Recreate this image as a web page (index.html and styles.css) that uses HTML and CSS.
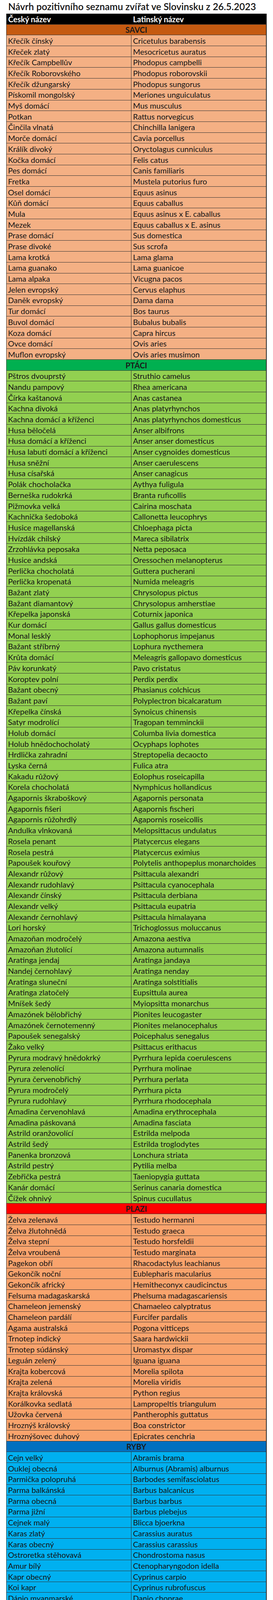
FILE: index.html
```html
<!DOCTYPE html>
<html lang="cs">
<head>
<meta charset="utf-8">
<title>Návrh pozitivního seznamu zvířat ve Slovinsku z 26.5.2023</title>
<link rel="stylesheet" href="styles.css">
</head>
<body>
<main class="page">
<h1 class="title">Návrh pozitivního seznamu zvířat ve Slovinsku z 26.5.2023</h1>
<div class="sheet">
<div class="head"><span class="c">Český název</span><span class="c">Latinský název</span></div>

<section class="grp savci">
<div class="sec">SAVCI</div>
<div class="r"><span class="c">Křečík čínský</span><span class="c">Cricetulus barabensis</span></div>
<div class="r"><span class="c">Křeček zlatý</span><span class="c">Mesocricetus auratus</span></div>
<div class="r"><span class="c">Křečík Campbellův</span><span class="c">Phodopus campbelli</span></div>
<div class="r"><span class="c">Křečík Roborovského</span><span class="c">Phodopus roborovskii</span></div>
<div class="r"><span class="c">Křečík džungarský</span><span class="c">Phodopus sungorus</span></div>
<div class="r"><span class="c">Pískomil mongolský</span><span class="c">Meriones unguiculatus</span></div>
<div class="r"><span class="c">Myš domácí</span><span class="c">Mus musculus</span></div>
<div class="r"><span class="c">Potkan</span><span class="c">Rattus norvegicus</span></div>
<div class="r"><span class="c">Činčila vlnatá</span><span class="c">Chinchilla lanigera</span></div>
<div class="r"><span class="c">Morče domácí</span><span class="c">Cavia porcellus</span></div>
<div class="r"><span class="c">Králík divoký</span><span class="c">Oryctolagus cunniculus</span></div>
<div class="r"><span class="c">Kočka domácí</span><span class="c">Felis catus</span></div>
<div class="r"><span class="c">Pes domácí</span><span class="c">Canis familiaris</span></div>
<div class="r"><span class="c">Fretka</span><span class="c">Mustela putorius furo</span></div>
<div class="r"><span class="c">Osel domácí</span><span class="c">Equus asinus</span></div>
<div class="r"><span class="c">Kůň domácí</span><span class="c">Equus caballus</span></div>
<div class="r"><span class="c">Mula</span><span class="c">Equus asinus x E. caballus</span></div>
<div class="r"><span class="c">Mezek</span><span class="c">Equus caballus x E. asinus</span></div>
<div class="r"><span class="c">Prase domácí</span><span class="c">Sus domestica</span></div>
<div class="r"><span class="c">Prase divoké</span><span class="c">Sus scrofa</span></div>
<div class="r"><span class="c">Lama krotká</span><span class="c">Lama glama</span></div>
<div class="r"><span class="c">Lama guanako</span><span class="c">Lama guanicoe</span></div>
<div class="r"><span class="c">Lama alpaka</span><span class="c">Vicugna pacos</span></div>
<div class="r"><span class="c">Jelen evropský</span><span class="c">Cervus elaphus</span></div>
<div class="r"><span class="c">Daněk evropský</span><span class="c">Dama dama</span></div>
<div class="r"><span class="c">Tur domácí</span><span class="c">Bos taurus</span></div>
<div class="r"><span class="c">Buvol domácí</span><span class="c">Bubalus bubalis</span></div>
<div class="r"><span class="c">Koza domácí</span><span class="c">Capra hircus</span></div>
<div class="r"><span class="c">Ovce domácí</span><span class="c">Ovis aries</span></div>
<div class="r"><span class="c">Muflon evropský</span><span class="c">Ovis aries musimon</span></div>
</section>

<section class="grp ptaci">
<div class="sec">PTÁCI</div>
<div class="r"><span class="c">Pštros dvouprstý</span><span class="c">Struthio camelus</span></div>
<div class="r"><span class="c">Nandu pampový</span><span class="c">Rhea americana</span></div>
<div class="r"><span class="c">Čírka kaštanová</span><span class="c">Anas castanea</span></div>
<div class="r"><span class="c">Kachna divoká</span><span class="c">Anas platyrhynchos</span></div>
<div class="r"><span class="c">Kachna domácí a kříženci</span><span class="c">Anas platyrhynchos domesticus</span></div>
<div class="r"><span class="c">Husa běločelá</span><span class="c">Anser albifrons</span></div>
<div class="r"><span class="c">Husa domácí a kříženci</span><span class="c">Anser anser domesticus</span></div>
<div class="r"><span class="c">Husa labutí domácí a kříženci</span><span class="c">Anser cygnoides domesticus</span></div>
<div class="r"><span class="c">Husa sněžní</span><span class="c">Anser caerulescens</span></div>
<div class="r"><span class="c">Husa císařská</span><span class="c">Anser canagicus</span></div>
<div class="r"><span class="c">Polák chocholačka</span><span class="c">Aythya fuligula</span></div>
<div class="r"><span class="c">Berneška rudokrká</span><span class="c">Branta ruficollis</span></div>
<div class="r"><span class="c">Pižmovka velká</span><span class="c">Cairina moschata</span></div>
<div class="r"><span class="c">Kachnička šedoboká</span><span class="c">Callonetta leucophrys</span></div>
<div class="r"><span class="c">Husice magellanská</span><span class="c">Chloephaga picta</span></div>
<div class="r"><span class="c">Hvízdák chilský</span><span class="c">Mareca sibilatrix</span></div>
<div class="r"><span class="c">Zrzohlávka peposaka</span><span class="c">Netta peposaca</span></div>
<div class="r"><span class="c">Husice andská</span><span class="c">Oressochen melanopterus</span></div>
<div class="r"><span class="c">Perlička chocholatá</span><span class="c">Guttera pucherani</span></div>
<div class="r"><span class="c">Perlička kropenatá</span><span class="c">Numida meleagris</span></div>
<div class="r"><span class="c">Bažant zlatý</span><span class="c">Chrysolopus pictus</span></div>
<div class="r"><span class="c">Bažant diamantový</span><span class="c">Chrysolopus amherstiae</span></div>
<div class="r"><span class="c">Křepelka japonská</span><span class="c">Coturnix japonica</span></div>
<div class="r"><span class="c">Kur domácí</span><span class="c">Gallus gallus domesticus</span></div>
<div class="r"><span class="c">Monal lesklý</span><span class="c">Lophophorus impejanus</span></div>
<div class="r"><span class="c">Bažant stříbrný</span><span class="c">Lophura nycthemera</span></div>
<div class="r"><span class="c">Krůta domácí</span><span class="c">Meleagris gallopavo domesticus</span></div>
<div class="r"><span class="c">Páv korunkatý</span><span class="c">Pavo cristatus</span></div>
<div class="r"><span class="c">Koroptev polní</span><span class="c">Perdix perdix</span></div>
<div class="r"><span class="c">Bažant obecný</span><span class="c">Phasianus colchicus</span></div>
<div class="r"><span class="c">Bažant paví</span><span class="c">Polyplectron bicalcaratum</span></div>
<div class="r"><span class="c">Křepelka čínská</span><span class="c">Synoicus chinensis</span></div>
<div class="r"><span class="c">Satyr modrolící</span><span class="c">Tragopan temminckii</span></div>
<div class="r"><span class="c">Holub domácí</span><span class="c">Columba livia domestica</span></div>
<div class="r"><span class="c">Holub hnědochocholatý</span><span class="c">Ocyphaps lophotes</span></div>
<div class="r"><span class="c">Hrdlička zahradní</span><span class="c">Streptopelia decaocto</span></div>
<div class="r"><span class="c">Lyska černá</span><span class="c">Fulica atra</span></div>
<div class="r"><span class="c">Kakadu růžový</span><span class="c">Eolophus roseicapilla</span></div>
<div class="r"><span class="c">Korela chocholatá</span><span class="c">Nymphicus hollandicus</span></div>
<div class="r"><span class="c">Agapornis škraboškový</span><span class="c">Agapornis personata</span></div>
<div class="r"><span class="c">Agapornis fišeri</span><span class="c">Agapornis fischeri</span></div>
<div class="r"><span class="c">Agapornis růžohrdlý</span><span class="c">Agapornis roseicollis</span></div>
<div class="r"><span class="c">Andulka vlnkovaná</span><span class="c">Melopsittacus undulatus</span></div>
<div class="r"><span class="c">Rosela penant</span><span class="c">Platycercus elegans</span></div>
<div class="r"><span class="c">Rosela pestrá</span><span class="c">Platycercus eximius</span></div>
<div class="r"><span class="c">Papoušek kouřový</span><span class="c">Polytelis anthopeplus monarchoides</span></div>
<div class="r"><span class="c">Alexandr růžový</span><span class="c">Psittacula alexandri</span></div>
<div class="r"><span class="c">Alexandr rudohlavý</span><span class="c">Psittacula cyanocephala</span></div>
<div class="r"><span class="c">Alexandr čínský</span><span class="c">Psittacula derbiana</span></div>
<div class="r"><span class="c">Alexandr velký</span><span class="c">Psittacula eupatria</span></div>
<div class="r"><span class="c">Alexandr černohlavý</span><span class="c">Psittacula himalayana</span></div>
<div class="r"><span class="c">Lori horský</span><span class="c">Trichoglossus moluccanus</span></div>
<div class="r"><span class="c">Amazoňan modročelý</span><span class="c">Amazona aestiva</span></div>
<div class="r"><span class="c">Amazoňan žlutolící</span><span class="c">Amazona autumnalis</span></div>
<div class="r"><span class="c">Aratinga jendaj</span><span class="c">Aratinga jandaya</span></div>
<div class="r"><span class="c">Nandej černohlavý</span><span class="c">Aratinga nenday</span></div>
<div class="r"><span class="c">Aratinga sluneční</span><span class="c">Aratinga solstitialis</span></div>
<div class="r"><span class="c">Aratinga zlatočelý</span><span class="c">Eupsittula aurea</span></div>
<div class="r"><span class="c">Mníšek šedý</span><span class="c">Myiopsitta monarchus</span></div>
<div class="r"><span class="c">Amazónek bělobřichý</span><span class="c">Pionites leucogaster</span></div>
<div class="r"><span class="c">Amazónek černotemenný</span><span class="c">Pionites melanocephalus</span></div>
<div class="r"><span class="c">Papoušek senegalský</span><span class="c">Poicephalus senegalus</span></div>
<div class="r"><span class="c">Žako velký</span><span class="c">Psittacus erithacus</span></div>
<div class="r"><span class="c">Pyrura modravý hnědokrký</span><span class="c">Pyrrhura lepida coerulescens</span></div>
<div class="r"><span class="c">Pyrura zelenolící</span><span class="c">Pyrrhura molinae</span></div>
<div class="r"><span class="c">Pyrura červenobřichý</span><span class="c">Pyrrhura perlata</span></div>
<div class="r"><span class="c">Pyrura modročelý</span><span class="c">Pyrrhura picta</span></div>
<div class="r"><span class="c">Pyrura rudohlavý</span><span class="c">Pyrrhura rhodocephala</span></div>
<div class="r"><span class="c">Amadina červenohlavá</span><span class="c">Amadina erythrocephala</span></div>
<div class="r"><span class="c">Amadina páskovaná</span><span class="c">Amadina fasciata</span></div>
<div class="r"><span class="c">Astrild oranžovolící</span><span class="c">Estrilda melpoda</span></div>
<div class="r"><span class="c">Astrild šedý</span><span class="c">Estrilda troglodytes</span></div>
<div class="r"><span class="c">Panenka bronzová</span><span class="c">Lonchura striata</span></div>
<div class="r"><span class="c">Astrild pestrý</span><span class="c">Pytilia melba</span></div>
<div class="r"><span class="c">Zebřička pestrá</span><span class="c">Taeniopygia guttata</span></div>
<div class="r"><span class="c">Kanár domácí</span><span class="c">Serinus canaria domestica</span></div>
<div class="r"><span class="c">Čížek ohnivý</span><span class="c">Spinus cucullatus</span></div>
</section>

<section class="grp plazi">
<div class="sec">PLAZI</div>
<div class="r"><span class="c">Želva zelenavá</span><span class="c">Testudo hermanni</span></div>
<div class="r"><span class="c">Želva žlutohnědá</span><span class="c">Testudo graeca</span></div>
<div class="r"><span class="c">Želva stepní</span><span class="c">Testudo horsfeldii</span></div>
<div class="r"><span class="c">Želva vroubená</span><span class="c">Testudo marginata</span></div>
<div class="r"><span class="c">Pagekon obří</span><span class="c">Rhacodactylus leachianus</span></div>
<div class="r"><span class="c">Gekončík noční</span><span class="c">Eublepharis macularius</span></div>
<div class="r"><span class="c">Gekončík africký</span><span class="c">Hemitheconyx caudicinctus</span></div>
<div class="r"><span class="c">Felsuma madagaskarská</span><span class="c">Phelsuma madagascariensis</span></div>
<div class="r"><span class="c">Chameleon jemenský</span><span class="c">Chamaeleo calyptratus</span></div>
<div class="r"><span class="c">Chameleon pardálí</span><span class="c">Furcifer pardalis</span></div>
<div class="r"><span class="c">Agama australská</span><span class="c">Pogona vitticeps</span></div>
<div class="r"><span class="c">Trnotep indický</span><span class="c">Saara hardwickii</span></div>
<div class="r"><span class="c">Trnotep súdánský</span><span class="c">Uromastyx dispar</span></div>
<div class="r"><span class="c">Leguán zelený</span><span class="c">Iguana iguana</span></div>
<div class="r"><span class="c">Krajta kobercová</span><span class="c">Morelia spilota</span></div>
<div class="r"><span class="c">Krajta zelená</span><span class="c">Morelia viridis</span></div>
<div class="r"><span class="c">Krajta královská</span><span class="c">Python regius</span></div>
<div class="r"><span class="c">Korálkovka sedlatá</span><span class="c">Lampropeltis triangulum</span></div>
<div class="r"><span class="c">Užovka červená</span><span class="c">Pantherophis guttatus</span></div>
<div class="r"><span class="c">Hroznýš královský</span><span class="c">Boa constrictor</span></div>
<div class="r"><span class="c">Hroznýšovec duhový</span><span class="c">Epicrates cenchria</span></div>
</section>

<section class="grp ryby">
<div class="sec">RYBY</div>
<div class="r"><span class="c">Cejn velký</span><span class="c">Abramis brama</span></div>
<div class="r"><span class="c">Ouklej obecná</span><span class="c">Alburnus (Abramis) alburnus</span></div>
<div class="r"><span class="c">Parmička polopruhá</span><span class="c">Barbodes semifasciolatus</span></div>
<div class="r"><span class="c">Parma balkánská</span><span class="c">Barbus balcanicus</span></div>
<div class="r"><span class="c">Parma obecná</span><span class="c">Barbus barbus</span></div>
<div class="r"><span class="c">Parma jižní</span><span class="c">Barbus plebejus</span></div>
<div class="r"><span class="c">Cejnek malý</span><span class="c">Blicca bjoerkna</span></div>
<div class="r"><span class="c">Karas zlatý</span><span class="c">Carassius auratus</span></div>
<div class="r"><span class="c">Karas obecný</span><span class="c">Carassius carassius</span></div>
<div class="r"><span class="c">Ostroretka stěhovavá</span><span class="c">Chondrostoma nasus</span></div>
<div class="r"><span class="c">Amur bílý</span><span class="c">Ctenopharyngodon idella</span></div>
<div class="r"><span class="c">Kapr obecný</span><span class="c">Cyprinus carpio</span></div>
<div class="r"><span class="c">Koi kapr</span><span class="c">Cyprinus rubrofuscus</span></div>
<div class="r"><span class="c">Dánio myanmarské</span><span class="c">Danio choprae</span></div>
<div class="r"><span class="c">Dánio perlové</span><span class="c">Danio margaritatus</span></div>
<div class="r"><span class="c">Dánio pruhované</span><span class="c">Danio rerio</span></div>
<div class="r"><span class="c">Parmička pětipruhá</span><span class="c">Desmopuntius pentazona</span></div>
<div class="r"><span class="c">Bolen dravý</span><span class="c">Leuciscus aspius</span></div>
<div class="r"><span class="c">Jelec jesen</span><span class="c">Leuciscus idus</span></div>
<div class="r"><span class="c">Jelec proudník</span><span class="c">Leuciscus leuciscus</span></div>
<div class="r"><span class="c">Parmička z Oděsy</span><span class="c">Pethia padamya</span></div>
<div class="r"><span class="c">Parmička purpurová</span><span class="c">Pethia nigrofasciata</span></div>
<div class="r"><span class="c">Střevle potoční</span><span class="c">Phoxinus phoxinus</span></div>
<div class="r"><span class="c">Parmička čtyřpruhá</span><span class="c">Puntigrus tetrazona</span></div>
<div class="r"><span class="c">Parmička duhová</span><span class="c">Puntius titteya</span></div>
<div class="r"><span class="c">Plotice lesklá</span><span class="c">Rutilus pigus</span></div>
<div class="r"><span class="c">Plotice obecná</span><span class="c">Rutilus rutilus</span></div>
<div class="r"><span class="c">Parmička Denisonova</span><span class="c">Sahyadria denisonii</span></div>
<div class="r"><span class="c">Perlín ostrobřichý</span><span class="c">Scardinius erithrophthalmus</span></div>
<div class="r"><span class="c">Jelec tloušť</span><span class="c">Squalius cephalus</span></div>
<div class="r"><span class="c">Kardinálka čínská</span><span class="c">Tanichthys albonubes</span></div>
<div class="r"><span class="c">Kardinálka vietnamská</span><span class="c">Tanichthys micagemmae</span></div>
<div class="r"><span class="c">Lín obecný</span><span class="c">Tinca tinca</span></div>
<div class="r"><span class="c">Razbora Espeho</span><span class="c">Trigonostigma espei</span></div>
<div class="r"><span class="c">Razbora Hengelova</span><span class="c">Trigonostigma hengeli</span></div>
<div class="r"><span class="c">Razbora klínoskvrnná</span><span class="c">Trigonostigma heteromorpha</span></div>
<div class="r"><span class="c">Podoustev říční</span><span class="c">Vimba vimba</span></div>
<div class="r"><span class="c">Sekavec příčnopásý</span><span class="c">Pangio kuhlii</span></div>
<div class="r"><span class="c">Tetra konžská</span><span class="c">Phenacogrammus interruptus</span></div>
<div class="r"><span class="c">Tetra černá</span><span class="c">Gymnocorymbus ternetzi</span></div>
<div class="r"><span class="c">Tetra štíhlá</span><span class="c">Hemigrammus gracilis</span></div>
<div class="r"><span class="c">Tetra císařská</span><span class="c">Nematobrycon palmeri</span></div>
<div class="r"><span class="c">Neonka červená</span><span class="c">Paracheirodon axelrodi</span></div>
<div class="r"><span class="c">Neonka obecná</span><span class="c">Paracheirodon innesi</span></div>
<div class="r"><span class="c">Neonka modrá</span><span class="c">Paracheirodon simulans</span></div>
<div class="r"><span class="c">Pancéřníček zelený</span><span class="c">Corydoras aeneus</span></div>
<div class="r"><span class="c">Pancéřníček skvrnitý</span><span class="c">Corydoras paleatus</span></div>
<div class="r"><span class="c">Krunýřovec modrý</span><span class="c">Ancistrus dolichopterus</span></div>
<div class="r"><span class="c">Sumec sklovitý</span><span class="c">Kryptopterus bichirrhis</span></div>
<div class="r"><span class="c">Sumec velký</span><span class="c">Silurus glanis</span></div>
<div class="r"><span class="c">Hlavatka obecná</span><span class="c">Hucho hucho</span></div>
<div class="r"><span class="c">Pstruh duhový</span><span class="c">Oncorhynchus mykiss</span></div>
<div class="r"><span class="c">Pstruh mramorovaný</span><span class="c">Salmo marmoratus</span></div>
<div class="r"><span class="c">Pstruh obecný potoční</span><span class="c">Salmo trutta fario</span></div>
<div class="r"><span class="c">Pstruh obecný jezerní</span><span class="c">Salmo trutta lacustris</span></div>
<div class="r"><span class="c">Siven severní</span><span class="c">Salvelinus alpinus</span></div>
<div class="r"><span class="c">Siven americký</span><span class="c">Salvelinus fontinalis</span></div>
<div class="r"><span class="c">Lipan podhorní</span><span class="c">Thymallus thymallus</span></div>
<div class="r"><span class="c">Lipan</span><span class="c">Thymallus aeliani</span></div>
<div class="r"><span class="c">Štika obecná</span><span class="c">Esox lucius</span></div>
<div class="r"><span class="c">Mník jednovousý</span><span class="c">Lota lota</span></div>
<div class="r"><span class="c">Okouníček sklovitý</span><span class="c">Parambassis ranga</span></div>
<div class="r"><span class="c">Tlamovec černoploutvý</span><span class="c">Labidochromis caeruleus</span></div>
<div class="r"><span class="c">Akara tečkovaná</span><span class="c">Laetacara curviceps</span></div>
<div class="r"><span class="c">Tlamovec příčnopruhý</span><span class="c">Maylandia zebra</span></div>
<div class="r"><span class="c">Tlamovec pestrý</span><span class="c">Melanochromis auratus</span></div>
<div class="r"><span class="c">Cichlidka Ramirezova</span><span class="c">Mikrogeophagus ramirezi</span></div>
<div class="r"><span class="c">Pestřenec červený</span><span class="c">Pelvicachromis pulcher</span></div>
<div class="r"><span class="c">Tlamovec Demasonův</span><span class="c">Pseudotropheus demasoni</span></div>
<div class="r"><span class="c">Tlamovec štíhlý</span><span class="c">Pseudotropheus elongatus</span></div>
<div class="r"><span class="c">Skalára amazonská</span><span class="c">Pterophyllum scalare</span></div>
<div class="r"><span class="c">Terčovec zelený</span><span class="c">Symphysodon aequifasciatus</span></div>
<div class="r"><span class="c">Duhovka Boesemanova</span><span class="c">Melanotenia boesemani</span></div>
<div class="r"><span class="c">Duhovka akvamarínová</span><span class="c">Melanotenia lacustris</span></div>
<div class="r"><span class="c">Duhovka australská</span><span class="c">Melanotaenia maccullochi</span></div>
<div class="r"><span class="c">Duhovka diamantová</span><span class="c">Melanotaenia praecox</span></div>
<div class="r"><span class="c">Živorodka širokoploutvá</span><span class="c">Poecilia latipinna</span></div>
<div class="r"><span class="c">Živorodka duhová</span><span class="c">Poecilia reticulata</span></div>
<div class="r"><span class="c">Živorodka ostrotlamá</span><span class="c">Poecilia sphenops</span></div>
<div class="r"><span class="c">Živorodka velkoploutvá</span><span class="c">Poecilia velifera</span></div>
<div class="r"><span class="c">Živorodka Wingeova</span><span class="c">Poecilia wingei</span></div>
<div class="r"><span class="c">Mečovka mexická</span><span class="c">Xiphophorus hellerii</span></div>
<div class="r"><span class="c">Plata skvrnitá</span><span class="c">Xiphophorus maculatus</span></div>
<div class="r"><span class="c">Plata pestrá</span><span class="c">Xiphophorus variatus</span></div>
<div class="r"><span class="c">Bojovnice pestrá</span><span class="c">Betta splendens</span></div>
<div class="r"><span class="c">Rájovec dlouhoploutvý</span><span class="c">Macropodus opercularis</span></div>
<div class="r"><span class="c">Čichavec medový</span><span class="c">Trichogaster chuna</span></div>
<div class="r"><span class="c">Čichavec pyskatý</span><span class="c">Trichogaster labiosa</span></div>
<div class="r"><span class="c">Čichavec zakrslý</span><span class="c">Trichogaster lalia</span></div>
<div class="r"><span class="c">Čichavec perleťový</span><span class="c">Trichopodus leeri</span></div>
<div class="r"><span class="c">Čichavec šedý</span><span class="c">Trichopodus trichopterus</span></div>
<div class="r"><span class="c">Okoun říční</span><span class="c">Perca fluviatilis</span></div>
<div class="r"><span class="c">Candát obecný</span><span class="c">Sander lucioperca</span></div>
<div class="r"><span class="c">Drsek větší</span><span class="c">Zingel zingel</span></div>
<div class="r"><span class="c">Mořčiák evropský</span><span class="c">Dicentrarchus labrax</span></div>
<div class="r"><span class="c">Mořan zlatý</span><span class="c">Sparus aurata</span></div>
</section>
</div>
</main>
</body>
</html>
```

FILE: styles.css
```css
* {
  box-sizing: border-box;
}

html,
body {
  margin: 0;
  padding: 0;
  background: #ffffff;
}

body {
  font-family: "Lato", "Liberation Sans", sans-serif;
  color: #141414;
}

.page {
  width: 700px;
}

.title {
  margin: 0;
  height: 35px;
  padding-left: 21px;
  font-size: 24.5px;
  font-weight: 600;
  line-height: 33px;
  color: #111111;
  white-space: nowrap;
}

.sheet {
  margin-left: 16px;
  width: 668px;
  border-left: 1px solid #2b2b2b;
  border-right: 2px solid #2b2b2b;
  border-bottom: 1px solid #2b2b2b;
}

.head,
.r,
.sec {
  height: 27.69px;
  font-size: 20px;
  line-height: 26px;
  padding-top: 0.6px;
  border-bottom: 1px solid #333333;
  white-space: nowrap;
}

.head,
.r {
  display: grid;
  grid-template-columns: 320px 1fr;
}

.c {
  display: block;
  padding-left: 4px;
}

.r .c:first-child {
  border-right: 1px solid #333333;
  padding-left: 3.5px;
  margin-top: -0.6px;
  padding-top: 0.6px;
}

.head {
  background: #000000;
  color: #ffffff;
  font-weight: 700;
}

.sec {
  text-align: center;
  font-weight: 700;
  color: #1a1a1a;
}

.savci .sec { background: #c55a11; }
.savci .r { background: #f4b084; }

.ptaci .sec { background: #00b050; }
.ptaci .r { background: #92d050; }

.plazi .sec { background: #ff0000; }
.plazi .r { background: #f9a36c; }

.ryby .sec { background: #0070c0; }
.ryby .r { background: #00b0f0; }
```
